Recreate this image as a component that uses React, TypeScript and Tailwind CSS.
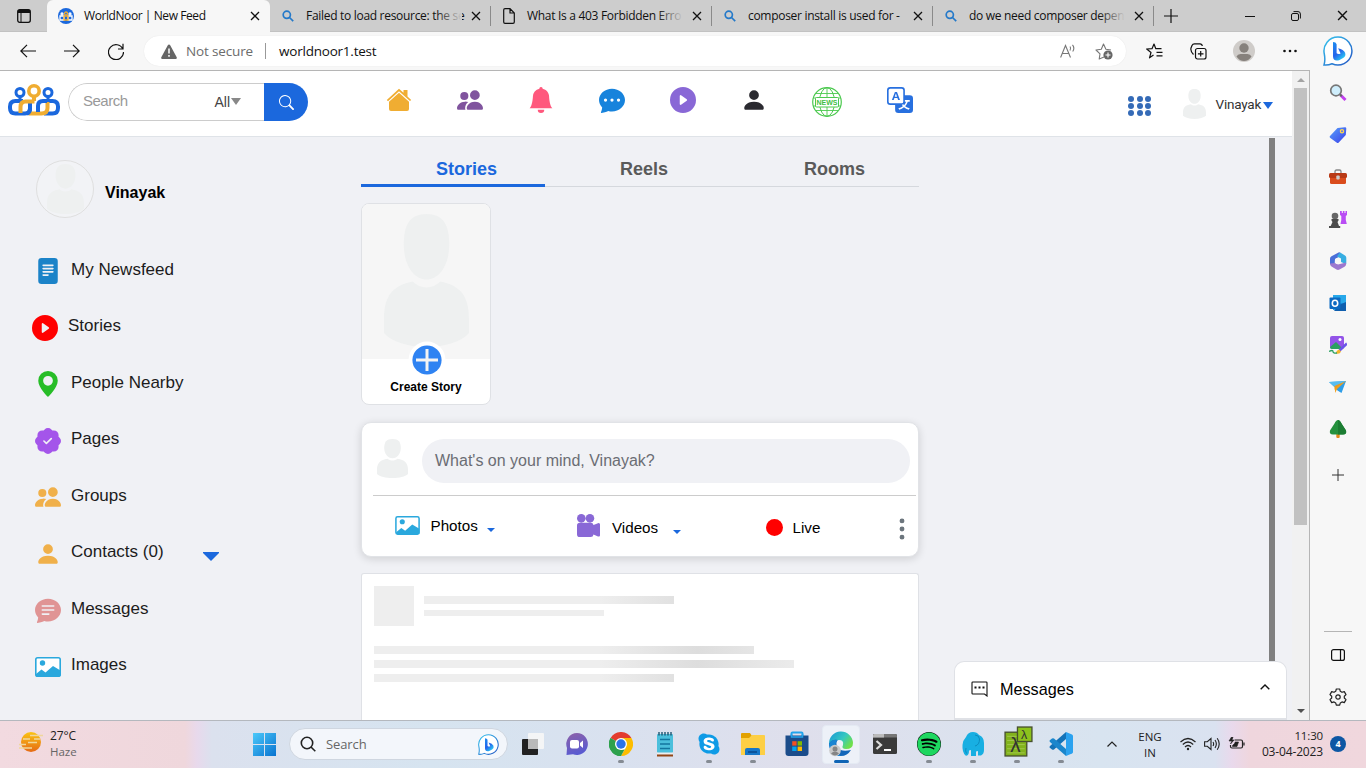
import React from "react";
import {
  BsPeopleFill, BsBellFill, BsChatDotsFill, BsPlayCircleFill, BsPersonFill, BsTranslate, BsSearch,
  BsFileTextFill, BsPatchCheckFill, BsGeoAltFill, BsCameraReelsFill, BsThreeDotsVertical,
  BsChatTextFill,
} from "react-icons/bs";
import { FaSpotify, FaSkype } from "react-icons/fa";

/* ---------- shared drawings ---------- */

function Avatar({ className }: { className: string }) {
  return (
    <svg viewBox="0 0 86 134" preserveAspectRatio="none" className={className} fill="#eef0f0">
      <path d="M43 0c17 0 23 11 23 31S56 66 43 66 20 51 20 31 26 0 43 0Z" />
      <path d="M29 68c8 8 20 8 28 0 19 4 29 13 29 38v14c-8 9-24 14-43 14S8 129 0 120v-14C0 81 10 72 29 68Z" />
    </svg>
  );
}

function Logo({ className }: { className: string }) {
  return (
    <svg viewBox="0 0 52 32" className={className} fill="none">
      <g stroke="#1b68dd" strokeWidth="3">
        <circle cx="12" cy="8.500" r="4" />
        <circle cx="40" cy="8.500" r="4" />
        <path d="M12 13v4M40 13v4" />
      </g>
      <path d="M10 17h-2.500Q2 17 2 22.500v1.500Q2 29.500 7.500 29.500H17q5 0 5-5V19" stroke="#1b68dd" strokeWidth="4" />
      <path d="M10 17h5M37 17h7.500Q50 17 50 22.500v1.500Q50 29.500 44.500 29.500H36" stroke="#1b68dd" strokeWidth="4" />
      <path d="M26 12v5M12.500 29v-6q0-5.500 5-5.500h9M39.500 18v6q0 5.500-6 5.500h-13" stroke="#f0ad32" strokeWidth="4" />
      <path d="M22 20v4.500q0 4-3 5M30 28v-6q0-5 5-5h4" stroke="#1b68dd" strokeWidth="4" />
      <circle cx="26" cy="7" r="5.200" stroke="#f0ad32" strokeWidth="3.600" />
    </svg>
  );
}

function Picture({ className }: { className: string }) {
  return (
    <svg viewBox="0 0 26 20" className={className} fill="#2aa8dd">
      <rect x=".8" y=".8" width="24.400" height="18.400" rx="1.800" fill="#fff" stroke="#2aa8dd" strokeWidth="1.600" />
      <circle cx="7.500" cy="6" r="2.700" />
      <path d="M1 17l5.500-4.500 4 3 7.500-6.500 7.500 4.500V19H1Z" />
    </svg>
  );
}

function BingBubble({ className }: { className: string }) {
  return (
    <svg viewBox="0 0 30 30" className={className}>
      <defs>
        <linearGradient id="bing-edge" x1="0" y1="0" x2="1" y2="1">
          <stop offset="0" stopColor="#35c5ee" />
          <stop offset="1" stopColor="#2455c4" />
        </linearGradient>
        <linearGradient id="bing-b" x1="0" y1="0" x2="0.6" y2="1">
          <stop offset="0" stopColor="#1c8ef0" />
          <stop offset="0.6" stopColor="#2563eb" />
          <stop offset="1" stopColor="#2bc4f3" />
        </linearGradient>
      </defs>
      <path d="M15 1a14 14 0 1 1-6 26.700Q5 29.500 1 29q1.500-5 .3-11A14 14 0 0 1 15 1Z" fill="#fff" stroke="url(#bing-edge)" strokeWidth="1.500" />
      <path d="M10 6q3 0 3.600 2.200v9q1.500 1.500 4 .3l-2.500-5.300q5.500 1.300 7 4.500 1.200 3.500-2 5.300l-4 2.200q-6 1.500-6.100-4Z" fill="url(#bing-b)" />
    </svg>
  );
}

function Cross({ className }: { className: string }) {
  return (
    <svg viewBox="0 0 10 10" className={className} stroke="currentColor" strokeWidth="1.300" fill="none">
      <path d="M1 1l8 8M9 1l-8 8" />
    </svg>
  );
}

/* ---------- browser chrome ---------- */

function Tab({ title, icon, fade }: { title: string; icon: "search" | "file"; fade: boolean }) {
  return (
    <div className="flex h-8 w-[221px] items-center pl-[12px]">
      {icon === "search" ? (
        <svg viewBox="0 0 12 12" className="mr-[12px] h-[12px] w-[12px] shrink-0" fill="none" stroke="#2479c9" strokeWidth="1.700">
          <circle cx="4.800" cy="4.800" r="3.600" />
          <path d="M7.500 7.500l3.700 3.700" />
        </svg>
      ) : (
        <svg viewBox="0 0 12 16" className="mr-[12px] h-[16px] w-[12px] shrink-0" fill="none" stroke="#111" strokeWidth="1.200">
          <path d="M.7 2Q.7.700 2 .7h5l4.300 4.300v9q0 1.300-1.300 1.300H2Q.7 15.300.7 14ZM7 .7V5h4.300" />
        </svg>
      )}
      <div className="relative w-[156px] shrink-0 whitespace-nowrap text-[12px] leading-4 tracking-[-0.3px] text-[#111]">
        {title}
        {fade && <div className="absolute inset-y-0 right-0 w-[26px] bg-gradient-to-r from-transparent to-[#cdcdcd]" />}
      </div>
      <Cross className="ml-[9px] h-[10px] w-[10px] shrink-0 text-[#111]" />
      <div className="ml-auto h-5 w-px bg-[#8a8a8a]" />
    </div>
  );
}

function TabStrip() {
  return (
    <div className="flex h-8 shrink-0 items-center border-b border-[#c2c2c2] bg-[#cdcdcd]">
      <div className="flex w-[47px] justify-center">
        <svg viewBox="0 0 14 14" className="h-[14px] w-[14px]" fill="none" stroke="#111">
          <rect x=".7" y=".7" width="12.600" height="12.600" rx="2" strokeWidth="1.300" />
          <path d="M1 2.500h12" strokeWidth="3" />
          <path d="M4 3v10" />
        </svg>
      </div>
      <div className="flex h-8 w-[223px] items-center rounded-t-[6px] bg-[#f7f7f7] pl-[11px]">
        <div className="mr-[10px] flex h-4 w-4 items-center justify-center rounded-full bg-[#1b68dd]">
          <svg viewBox="0 0 14 10" className="h-[10px] w-[14px]" fill="none" strokeWidth="1.300">
            <path d="M1 5h4v4H1ZM9 5h4v4H9Z" stroke="#fff" />
            <path d="M5 5h4v4H5Z" stroke="#f0ad32" />
            <circle cx="7" cy="2.500" r="1.500" stroke="#f0ad32" />
            <circle cx="3" cy="3" r="1" stroke="#fff" />
            <circle cx="11" cy="3" r="1" stroke="#fff" />
          </svg>
        </div>
        <div className="w-[166px] whitespace-nowrap text-[12px] leading-4 tracking-[-0.42px] text-[#111]">WorldNoor | New Feed</div>
        <Cross className="h-[10px] w-[10px] text-[#111]" />
      </div>
      <Tab title="Failed to load resource: the se" icon="search" fade />
      <Tab title="What Is a 403 Forbidden Erro" icon="file" fade />
      <Tab title="composer install is used for -" icon="search" fade={false} />
      <Tab title="do we need composer depen" icon="search" fade />
      <svg viewBox="0 0 14 14" className="ml-[10px] h-[14px] w-[14px]" stroke="#111" strokeWidth="1.200"><path d="M7 0v14M0 7h14" /></svg>
      <div className="ml-auto flex items-center gap-[36px] pr-[18px]">
        <svg viewBox="0 0 10 10" className="h-[10px] w-[10px]" stroke="#111"><path d="M0 5.500h10" /></svg>
        <svg viewBox="0 0 10 10" className="h-[10px] w-[10px]" fill="none" stroke="#111">
          <rect x=".5" y="2.500" width="7" height="7" rx="1.500" />
          <path d="M2.500.6H7Q9.400.600 9.400 3v4.500" />
        </svg>
        <Cross className="h-[11px] w-[11px] text-[#111]" />
      </div>
    </div>
  );
}

function Toolbar() {
  return (
    <div className="flex h-[38px] shrink-0 items-center bg-[#f7f7f7]">
      <svg viewBox="0 0 16 14" className="ml-[20px] h-[14px] w-[16px]" fill="none" stroke="#111" strokeWidth="1.200"><path d="M16 7H1M7 .8L.8 7 7 13.200" /></svg>
      <svg viewBox="0 0 16 14" className="ml-[28px] h-[14px] w-[16px]" fill="none" stroke="#111" strokeWidth="1.200"><path d="M0 7h15M9 .8L15.200 7 9 13.200" /></svg>
      <svg viewBox="0 0 16 17" className="ml-[28px] h-[17px] w-[16px]" fill="none" stroke="#111" strokeWidth="1.200"><path d="M14.800 6A7.500 7.500 0 1 0 15.500 9M15 .8V6H10" /></svg>
      <div className="ml-[20px] flex h-[30px] w-[982px] items-center rounded-full bg-white pl-[17px] shadow-[0_0_1px_#ddd]">
        <svg viewBox="0 0 16 15" className="h-[15px] w-[16px]">
          <path d="M8 .5q.8 0 1.200.800l6.500 12q.5 1.500-1 1.700H1.300Q-.2 14.800.3 13.300l6.500-12Q7.200.500 8 .5Z" fill="#666" />
          <path d="M8 4.500v5M8 11v1.700" stroke="#fff" strokeWidth="1.500" />
        </svg>
        <div className="ml-[9px] w-[79px] whitespace-nowrap text-[13.500px] leading-5 tracking-[-0.15px] text-[#6c6c6c]">Not secure</div>
        <div className="h-[16px] w-px bg-[#999]" />
        <div className="ml-[13px] w-[781px] text-[13.500px] leading-5 tracking-[-0.22px] text-[#111]">worldnoor1.test</div>
        <svg viewBox="0 0 16 14" className="h-[14px] w-[16px]" fill="none" stroke="#777" strokeWidth="1.100">
          <path d="M.6 13.500L5.500 1.500l5 12M2.300 9.500h6.500M10 2.500q1.300 1.500 0 4M12.500.800q2.600 3.200.2 6.700" />
        </svg>
        <svg viewBox="0 0 18 18" className="ml-[19px] h-[18px] w-[18px]" fill="none">
          <path d="M9 15l-4.800 2 .8-5.200L1 8l5.300-.8L8.500 2l2.400 5.200L16 8" stroke="#777" strokeWidth="1.100" strokeLinejoin="round" />
          <circle cx="13" cy="13" r="4.600" fill="#666" />
          <path d="M13 10.500v5M10.500 13h5" stroke="#fff" strokeWidth="1.100" />
        </svg>
      </div>
      <svg viewBox="0 0 17 16" className="ml-[20px] h-[16px] w-[17px]" fill="none" stroke="#111" strokeWidth="1.200" strokeLinejoin="round">
        <path d="M7.500 12L3.500 14.800 5 9.500.7 6 6 5.700 8 1l1.800 4.700h5.700M10.500 9.300h6M10.500 12.800h6" />
      </svg>
      <svg viewBox="0 0 17 17" className="ml-[27px] h-[17px] w-[17px]" fill="none" stroke="#111" strokeWidth="1.200">
        <rect x="5.500" y="5.500" width="10.500" height="10.500" rx="2" />
        <path d="M10.700 8v5.600M7.900 10.800h5.600M3.500 11.500Q.2 8 1 5L2 2.500Q2.700 1 4.500.900L10 .800q2 0 2.300 2.200" />
      </svg>
      <svg viewBox="0 0 22 22" className="ml-[26px] h-[22px] w-[22px]">
        <circle cx="11" cy="11" r="11" fill="#cfccc9" />
        <circle cx="11" cy="8" r="4.700" fill="#86817c" />
        <path d="M3.500 16.500q1-2.500 4-2.500h7q3 0 4 2.500Q15.500 21 11 21t-7.500-4.500Z" fill="#86817c" />
      </svg>
      <svg viewBox="0 0 14 4" className="ml-[28px] h-[4px] w-[14px]" fill="#111"><circle cx="1.500" cy="2" r="1.300" /><circle cx="7" cy="2" r="1.300" /><circle cx="12.500" cy="2" r="1.300" /></svg>
      <BingBubble className="ml-[26px] h-[30px] w-[30px]" />
    </div>
  );
}

/* ---------- site ---------- */

function NewsGlobe() {
  return (
    <svg viewBox="0 0 30 30" className="ml-[45px] h-[30px] w-[30px]" fill="none" stroke="#4cc94f">
      <circle cx="15" cy="15" r="14.300" strokeWidth="1.200" />
      <ellipse cx="15" cy="15" rx="7.500" ry="14.300" />
      <path d="M15 1v28M3.500 6.500h23M3.500 23.500h23M1 11h28M1 19h28" strokeWidth=".9" />
      <rect x="3.500" y="10.500" width="23" height="9.500" rx="1" fill="#fff" />
      <text x="15" y="17.800" textAnchor="middle" fontFamily="Liberation Sans, sans-serif" fontWeight="bold" fontSize="7" fill="#3fbf42" stroke="none">NEWS</text>
    </svg>
  );
}

function SiteHeader() {
  return (
    <header className="flex h-[66px] shrink-0 items-start border-b border-[#dfe3e8] bg-white pl-[8px]">
      <Logo className="mt-[13px] h-[32px] w-[52px]" />
      <div className="ml-[8px] mt-[12px] flex h-[38px] w-[240px] overflow-hidden rounded-full">
        <div className="flex w-[196px] items-center rounded-l-full border border-r-0 border-[#ccc] pl-[14px] text-[14px]">
          <div className="mt-[-2px] w-[131.500px] text-[15px] tracking-[-0.5px] text-[#999]">Search</div>
          <div className="text-[14px] text-[#444]">All</div>
          <svg viewBox="0 0 10 7" className="ml-[1px] mt-[-2px] h-[7px] w-[10px]" fill="#888"><path d="M0 0h10L5 7Z" /></svg>
        </div>
        <div className="flex w-[44px] items-center justify-center bg-[#1b68dd] text-white"><BsSearch size={15} /></div>
      </div>
      <nav className="ml-[78px] mt-[16px] flex items-start">
        <svg viewBox="0 0 26 26" className="h-[26px] w-[26px]" fill="#f0ad32">
          <path d="M.8 13L13 1.800l4.500 4V3h4v6.500l3.700 3.400-1.200 1.200L13 4.200 2 14.200Z" />
          <path d="M13 5.700l10 9V22q0 2-2 2H5q-2 0-2-2v-7.300Z" />
        </svg>
        <BsPeopleFill size={26} className="ml-[45px] text-[#80549e]" />
        <BsBellFill size={26} className="ml-[45px] text-[#ff587d]" />
        <BsChatDotsFill size={26} className="ml-[45px] text-[#1783dc]" />
        <BsPlayCircleFill size={26} className="ml-[45px] text-[#8968d6]" />
        <BsPersonFill size={26} className="ml-[45px] text-[#2b2a30]" />
        <NewsGlobe />
        <BsTranslate size={26} className="ml-[45px] text-[#2870df]" />
      </nav>
      <div className="ml-[215px] mt-[25px] grid grid-cols-3 gap-x-[2.500px] gap-y-[1.200px]">
        {[0, 1, 2, 3, 4, 5, 6, 7, 8].map((n) => <div key={n} className="h-[6px] w-[6px] rounded-full bg-[#356bb7]" />)}
      </div>
      <Avatar className="ml-[32px] mt-[18px] h-[30px] w-[23px]" />
      <div className="ml-[9.500px] mt-[23px] w-[47.500px] whitespace-nowrap font-[Roboto,sans-serif] text-[13.500px] leading-5 tracking-[-0.2px] text-[#333]">Vinayak</div>
      <svg viewBox="0 0 10 7" className="mt-[31px] h-[7px] w-[10px]" fill="#1b68dd"><path d="M0 0h10L5 7Z" /></svg>
    </header>
  );
}

function MenuRow({ icon, label, wide }: { icon: React.ReactNode; label: string; wide?: boolean }) {
  return (
    <div className={wide ? "flex h-[56.500px] items-center pl-[32px]" : "flex h-[56.500px] items-center pl-[35px]"}>
      <div className="mr-[10px] mt-[3px]">{icon}</div>
      <div className="whitespace-nowrap text-[17px] text-[#1c1c1c]">{label}</div>
    </div>
  );
}

function LeftMenu() {
  return (
    <aside className="w-[361px] shrink-0">
      <div className="flex h-[104.400px] items-start pl-[36px] pt-[23px]">
        <div className="flex h-[58px] w-[58px] justify-center overflow-hidden rounded-full border border-[#dfdfdf] bg-[#f2f3f6]">
          <Avatar className="mt-[3px] h-[50px] w-[37px]" />
        </div>
        <div className="ml-[11px] mt-[21px] text-[16px] font-bold text-black">Vinayak</div>
      </div>
      <MenuRow label="My Newsfeed" icon={<BsFileTextFill size={26} className="text-[#1b83c8]" />} />
      <MenuRow label="Stories" wide icon={<BsPlayCircleFill size={26} className="text-[#ff0000]" />} />
      <MenuRow label="People Nearby" icon={<BsGeoAltFill size={26} className="text-[#27bd27]" />} />
      <MenuRow label="Pages" icon={<BsPatchCheckFill size={26} className="text-[#a455ea]" />} />
      <MenuRow label="Groups" icon={<BsPeopleFill size={26} className="text-[#f0b04a]" />} />
      <div className="flex">
        <MenuRow label="Contacts (0)" icon={<BsPersonFill size={26} className="text-[#f0b04a]" />} />
        <svg viewBox="0 0 16 9" className="ml-[39px] mt-[28px] h-[9px] w-[16px]" fill="#1b68dd"><path d="M0 0h16v1L8 9 0 1Z" /></svg>
      </div>
      <MenuRow label="Messages" icon={<BsChatTextFill size={26} className="text-[#e09494]" />} />
      <MenuRow label="Images" icon={<Picture className="h-[20px] w-[26px]" />} />
    </aside>
  );
}

function Feed() {
  return (
    <main className="flex h-[583px] w-[558px] shrink-0 flex-col overflow-visible">
      <div className="mt-[14px] flex h-[36px] text-[18px] font-bold text-[#5a5a5a]">
        <div className="w-[184px] border-b-[3px] border-[#1b68dd] pl-[75px] pt-[5px] text-[#1b68dd]">Stories</div>
        <div className="w-[184px] border-b border-[#d5d8dd] pl-[75px] pt-[5px]">Reels</div>
        <div className="w-[190px] border-b border-[#d5d8dd] pl-[75px] pt-[5px]">Rooms</div>
      </div>
      <div className="mt-[16px] flex h-[202px] w-[130px] shrink-0 flex-col items-center overflow-hidden rounded-[8px] border border-[#dfe1e5] bg-white">
        <div className="flex h-[155px] w-full shrink-0 justify-center bg-[#f6f6f6]">
          <Avatar className="ml-[1px] mt-[10px] h-[133px] w-[85px]" />
        </div>
        <svg viewBox="0 0 38 38" className="-mt-[18.500px] ml-[1px] h-[38px] w-[38px] shrink-0">
          <circle cx="19" cy="19" r="18.500" fill="#fff" />
          <circle cx="19" cy="19" r="14.600" fill="#2f83f2" />
          <path d="M19 8v22M8 19h22" stroke="#f3f3f3" strokeWidth="3" />
        </svg>
        <div className="-mt-[1px] text-[12px] font-bold leading-[18px] text-black">Create Story</div>
      </div>
      <section className="mt-[17px] h-[135px] w-[558px] shrink-0 rounded-[10px] border border-[#e1e3e7] bg-white shadow-[0_2px_8px_rgba(0,0,0,0.14)]">
        <div className="flex pt-[16px]">
          <Avatar className="ml-[15px] h-[39px] w-[31px]" />
          <div className="ml-[14px] h-[44px] w-[488px] rounded-full bg-[#f0f1f5] pl-[13px] pt-[10px] text-[16px] leading-6 text-[#6b6d74]">What's on your mind, Vinayak?</div>
        </div>
        <div className="ml-[11px] mt-[12px] h-px w-[543px] bg-[#ccc]" />
        <div className="flex items-start text-[15.200px] leading-5 text-black">
          <Picture className="ml-[33px] mt-[20px] h-[19px] w-[25px]" />
          <div className="ml-[10.500px] mt-[20px] w-[56.500px]">Photos</div>
          <svg viewBox="0 0 8 4" className="mt-[32px] h-[4px] w-[8px]" fill="#1b68dd"><path d="M0 0h8L4 4Z" /></svg>
          <BsCameraReelsFill size={23} className="ml-[82px] mt-[18px] text-[#8968d6]" />
          <div className="ml-[12px] mt-[22px] w-[61px]">Videos</div>
          <svg viewBox="0 0 8 4" className="mt-[34px] h-[4px] w-[8px]" fill="#1b68dd"><path d="M0 0h8L4 4Z" /></svg>
          <div className="ml-[85px] mt-[22.500px] h-[17px] w-[17px] rounded-full bg-[#ff0000]" />
          <div className="ml-[9.500px] mt-[22px] w-[96.500px]">Live</div>
          <BsThreeDotsVertical size={26} className="mt-[20px] text-[#6c757d]" />
        </div>
      </section>
      <section className="mt-[16px] h-[147px] shrink-0 rounded-t-[3px] border border-b-0 border-[#dfe1e6] bg-white px-[12px] pt-[12px]">
        <div className="flex">
          <div className="h-10 w-10 bg-[#eee]" />
          <div className="ml-[10px] pt-[10px]">
            <div className="h-[8px] w-[250px] bg-[linear-gradient(90deg,#eee_176px,#ddd_273px)]" />
            <div className="mt-[6px] h-[6px] w-[180px] bg-[#eee]" />
          </div>
        </div>
        <div className="mt-[20px] h-[8px] w-[380px] bg-[linear-gradient(90deg,#eee_226px,#ddd_323px,#eee_440px)]" />
        <div className="mt-[6px] h-[8px] w-[420px] bg-[linear-gradient(90deg,#eee_226px,#ddd_323px,#eee_440px)]" />
        <div className="mt-[6px] h-[8px] w-[300px] bg-[linear-gradient(90deg,#eee_226px,#ddd_323px)]" />
      </section>
    </main>
  );
}

function SitePage() {
  return (
    <div className="relative flex h-[649px] w-[1292px] shrink-0 flex-col overflow-hidden bg-[#f0f1f5] font-['Liberation_Sans',Arial,sans-serif]">
      <SiteHeader />
      <div className="flex h-[583px]">
        <LeftMenu />
        <Feed />
        <div className="ml-[350px] mt-px w-[6px] bg-[#808080]" />
      </div>
      <div className="absolute bottom-0 left-[954px] flex h-[59px] w-[333px] items-center rounded-t-[10px] border border-b-2 border-[#dfe1e6] bg-white pl-[16px] pr-[16px]">
        <svg viewBox="0 0 17 16" className="mt-[-2px] h-[16px] w-[17px]" fill="none" stroke="#111" strokeWidth="1.100">
          <path d="M1.800 1h13.400q.8 0 .8.800V15l-2.500-2H1.800Q1 13 1 12.200V1.800Q1 1 1.800 1Z" />
          <path d="M3.500 6.500h2M7.500 6.500h2M11.500 6.500h2" strokeWidth="2" />
        </svg>
        <div className="-mt-[2px] ml-[12px] text-[16.200px] text-black">Messages</div>
        <svg viewBox="0 0 10 6" className="ml-auto mt-[-6px] h-[6px] w-[10px]" fill="none" stroke="#111" strokeWidth="1.400"><path d="M.7 5.300L5 1l4.300 4.300" /></svg>
      </div>
    </div>
  );
}

function Scrollbar() {
  return (
    <div className="flex h-[649px] w-[17px] shrink-0 flex-col items-center bg-[#f1f1f1]">
      <svg viewBox="0 0 8 4" className="mt-[7px] h-[4px] w-[8px]" fill="#a3a3a3"><path d="M0 4h8L4 0Z" /></svg>
      <div className="mt-[6px] h-[437px] w-[13px] bg-[#c1c1c1]" />
      <svg viewBox="0 0 8 4" className="mb-[7px] mt-auto h-[4px] w-[8px]" fill="#505050"><path d="M0 0h8L4 4Z" /></svg>
    </div>
  );
}

/* ---------- Edge side rail ---------- */

const railIcons: React.ReactNode[] = [
  <g>
    <path d="M11.500 11L16.500 16" stroke="#c23ff0" strokeWidth="3" />
    <path d="M10.500 10l2.300 2.300" stroke="#666" strokeWidth="2" />
    <circle cx="7" cy="6.500" r="5.300" fill="#cfeefc" stroke="#777" strokeWidth="1.700" />
  </g>,
  <g>
    <path d="M1 10l7.500-8L16 1.200q1.300 0 1.300 1.300l-.5 6.500-7.300 7.700q-.8.800-1.600 0l-6.900-5q-.8-.8 0-1.700Z" fill="url(#rail-blue)" />
    <circle cx="13" cy="5.200" r="1.600" fill="#5b6bf0" stroke="#ffd84a" strokeWidth="1.300" />
  </g>,
  <g>
    <path d="M6 5V3.500Q6 2 7.500 2h3Q12 2 12 3.500V5" fill="none" stroke="#888" strokeWidth="1.300" />
    <rect x="1" y="7" width="16" height="9" rx="1.500" fill="#da4c1c" />
    <rect x="0" y="5" width="18" height="5" rx="1.500" fill="#b93a16" />
    <rect x="7.300" y="7.500" width="3.400" height="4" rx="1" fill="#ccc" />
  </g>,
  <g>
    <path d="M11 1h1.800v2h1V1h1.700v2h1V1H18v4l-1.200 1v4l1 4H11.500l.8-4V6L11 5Z" fill="#b94df4" />
    <circle cx="6" cy="6" r="3.300" fill="#666" />
    <path d="M2.500 9h7v1.500L8.500 12l1.500 4h1.200v2H0v-2h1.700L3.500 12l-1-1.500Z" fill="#4b4b4b" />
  </g>,
  <g>
    <path d="M9.500.5L2.500 4.300Q1 5 1 6.800V12l4.500 2.500L6 7l6-3.300V1Q10.500 0 9.500.500Z" fill="#4a6fd8" />
    <path d="M12 1l4 2.500q1.300.700 1.300 2.300v6.500L12 10V6.500L8 4.500 10.500 1Z" fill="#37aee2" />
    <path d="M1 11.500L6 11l3 1.500 8-2v2q0 1.500-1.500 2.300l-5 2.800q-1.500.7-3 0l-5-3Q1 13.500 1 11.500Z" fill="#9c78cf" />
    <circle cx="9" cy="9" r="3.100" fill="#f7f7f7" />
  </g>,
  <g>
    <rect x="4" y="1" width="13" height="15" fill="#28a8ea" />
    <path d="M4 9l13 7V9Z" fill="#1490df" />
    <path d="M10 11l7-3v9H5Z" fill="#0f5fae" />
    <rect x="0.500" y="3.500" width="11" height="11.500" rx="1" fill="#0c6ac2" />
    <ellipse cx="6" cy="9.200" rx="2.700" ry="3" fill="none" stroke="#fff" strokeWidth="1.600" />
  </g>,
  <g>
    <rect x="1" y="0" width="14" height="13" rx="2" fill="#9354e8" />
    <path d="M1 11l6-5 6 6-1 1H3q-2 0-2-2Z" fill="#2aa05f" />
    <circle cx="11" cy="3.500" r="1.500" fill="#fff" />
    <path d="M18 7.500l-7.500 7" stroke="#6a55e8" strokeWidth="2.600" />
    <path d="M7 17.500q0-3 3-4l2 2q-1 3-5 2Z" fill="#f4b52a" />
    <path d="M0 15.500q4-2 4 0t4 1.500" fill="none" stroke="#2aa05f" strokeWidth="1.300" />
  </g>,
  <g>
    <path d="M0 4l17-1-4.500 12-4-2.500L5.500 9Z" fill="#2f9ee8" />
    <path d="M17 3L6 9v6l2.500-4.500Z" fill="#f2a11f" />
    <path d="M0 4l17-1L5.500 9Z" fill="#58bdf0" />
    <path d="M17 3L5.500 8v4l2-3Z" fill="#ec9a1c" />
  </g>,
  <g>
    <rect x="7.300" y="13" width="3.400" height="5" rx="1" fill="#e28a1b" />
    <path d="M9 0q2 0 3.500 3.500L17 10.500q1 4-3 4H4q-4 0-3-4L5.500 3.500Q7 0 9 0Z" fill="#25913e" />
    <path d="M9 0q2 0 3.500 3.500L17 10.500q1 4-3 4H9Z" fill="#1c7d33" />
  </g>,
];

function SideRail() {
  return (
    <div className="flex h-[650px] w-[57px] shrink-0 flex-col items-center border-l border-[#b5b5b5] bg-[#f7f7f7] pt-[14px]">
      <svg className="h-0 w-0">
        <linearGradient id="rail-blue" x1="0" y1="0" x2="1" y2="1"><stop offset="0" stopColor="#58a2fb" /><stop offset="1" stopColor="#3b3fe8" /></linearGradient>
      </svg>
      <div className="flex flex-col gap-[24px]">
        {railIcons.map((icon, i) => <svg key={i} viewBox="0 0 18 18" className="h-[18px] w-[18px]">{icon}</svg>)}
      </div>
      <svg viewBox="0 0 12 12" className="mt-[31px] h-[12px] w-[12px]" stroke="#333"><path d="M6 0v12M0 6h12" /></svg>
      <div className="mt-auto h-px w-[28px] bg-[#b5b5b5]" />
      <svg viewBox="0 0 14 12" className="mt-[17px] h-[12px] w-[14px]" fill="none" stroke="#111" strokeWidth="1.200"><rect x=".6" y=".6" width="12.800" height="10.800" rx="2" /><path d="M9.500 0v12" /></svg>
      <svg viewBox="0 0 18 18" className="mb-[14px] mt-[27px] h-[18px] w-[18px]" fill="none" stroke="#222" strokeWidth="1.200" strokeLinejoin="round">
        <path d="M7.300 1h3.400l.6 2.300 1.700 1 2.300-.7 1.700 3-1.700 1.600v1.800l1.700 1.600-1.700 3-2.300-.7-1.700 1-.6 2.300H7.300l-.6-2.300-1.700-1-2.300.7-1.700-3L2.700 10V8.200L1 6.600l1.700-3 2.300.7 1.700-1Z" />
        <circle cx="9" cy="9" r="2.200" />
      </svg>
    </div>
  );
}

/* ---------- taskbar ---------- */

function Slot({ children, running, active }: { children: React.ReactNode; running?: boolean; active?: boolean }) {
  return (
    <div className={active ? "mx-[3px] mt-[4px] flex h-[39px] w-[38px] flex-col items-center rounded-[4px] border border-[#e4eaf3] bg-[#edf1f8]" : "mt-[4px] flex h-[39px] w-[44px] flex-col items-center"}>
      <div className={active ? "mt-[5px] flex h-[26px] items-center" : "mt-[6px] flex h-[26px] items-center"}>{children}</div>
      {running && <div className="mt-[3px] h-[3px] w-[6px] rounded-full bg-[#858b93]" />}
      {active && <div className="mt-[3px] h-[3px] w-[15px] rounded-full bg-[#0f64b5]" />}
    </div>
  );
}

function TaskIcons() {
  return (
    <div className="ml-[3px] flex items-start">
      <Slot><svg viewBox="0 0 24 24" className="h-[24px] w-[24px]"><rect x="1" y="7" width="16" height="16" rx="1" fill="#222" /><rect x="7" y="1" width="16" height="16" rx="1" fill="#f4f5f6" /><rect x="7" y="7" width="10" height="10" fill="#b9b9b9" /></svg></Slot>
      <Slot><svg viewBox="0 0 24 24" className="h-[24px] w-[24px]"><defs><linearGradient id="chat" x1="0" y1="0" x2=".3" y2="1"><stop offset="0" stopColor="#8e62a8" /><stop offset="1" stopColor="#5a5bd0" /></linearGradient></defs><path d="M12 1a11 11 0 1 1-4 21.300L1.500 23 2 16A11 11 0 0 1 12 1Z" fill="url(#chat)" /><rect x="5" y="8" width="9" height="8.500" rx="2" fill="#fff" /><path d="M15 11l3-2.500v7.500L15 13.500Z" fill="#fff" /></svg></Slot>
      <Slot running><svg viewBox="0 0 24 24" className="h-[24px] w-[24px]">
        <path d="M12 12L1.600 6a12 12 0 0 1 20.800 0Z" fill="#e33b2e" /><path d="M12 12v12A12 12 0 0 1 1.600 6Z" fill="#2da14d" /><path d="M12 6h10.400A12 12 0 0 1 12 24l5.200-9Z" fill="#fdbd00" /><path d="M1.600 6l5.200 9L12 18l3.500-.5L12 24A12 12 0 0 1 1.600 6Z" fill="#2da14d" />
        <circle cx="12" cy="12" r="6" fill="#fff" /><circle cx="12" cy="12" r="4.700" fill="#2c73e8" /></svg></Slot>
      <Slot><svg viewBox="0 0 18 25" className="h-[25px] w-[18px]"><rect x="1" y="2" width="16" height="19" rx="1" fill="#4bbfdc" /><path d="M3 0v3.500M6 0v3.500M9 0v3.500M12 0v3.500M15 0v3.500" stroke="#1d5470" strokeWidth="1.400" /><path d="M4 7.500h10M4 12h10M4 16.500h10" stroke="#13769e" strokeWidth="1.600" /><rect x="1" y="20.500" width="16" height="2" fill="#eee" /><rect x="1" y="22.500" width="16" height="2" fill="#934615" /></svg></Slot>
      <Slot running><div className="h-[24px] w-[24px] rounded-full bg-[radial-gradient(circle,#fff_55%,transparent_56%)]"><FaSkype size={24} className="text-[#0f9be6]" /></div></Slot>
      <Slot running><svg viewBox="0 0 24 24" className="h-[24px] w-[24px]"><path d="M0 2q0-1 1-1h8l2 3h13v9H0Z" fill="#e2a100" /><path d="M0 6h8l3-3h12q1 0 1 1v19H0Z" fill="#fdcf45" /><path d="M4 23v-5q0-2 2-2h11q2 0 2 2v5Z" fill="#1676c8" /><rect x="7" y="19" width="9" height="2" fill="#0b539b" /></svg></Slot>
      <Slot><svg viewBox="0 0 24 26" className="h-[26px] w-[24px]"><path d="M6.500 6V2.500q0-1 1-1h9q1 0 1 1V6" fill="none" stroke="#20a4ec" strokeWidth="2" /><path d="M0.500 4.500h23v17.500q0 3-3 3h-17q-3 0-3-3Z" fill="#1b4c8a" /><path d="M6.500 3v3h11V3" fill="none" stroke="#20a4ec" strokeWidth="1.500" /><path d="M7.200 10.200h4.400v4.400H7.200Z" fill="#f25022" /><path d="M12.600 10.200h4.400v4.400h-4.400Z" fill="#7fba00" /><path d="M7.200 15.600h4.400v4.400H7.200Z" fill="#00a4ef" /><path d="M12.600 15.600h4.400v4.400h-4.400Z" fill="#ffb900" /></svg></Slot>
      <Slot active><svg viewBox="0 0 26 26" className="h-[26px] w-[26px]"><defs><linearGradient id="edge-top" x1="0" y1="0" x2="1" y2=".6"><stop offset="0" stopColor="#1796d8" /><stop offset=".6" stopColor="#35c8c0" /><stop offset="1" stopColor="#6fe04a" /></linearGradient></defs>
        <path d="M1 13A12 12 0 0 1 25 12q0 6-7 6-5 0-3-4 1-5-4-5Q5 9 1 15Z" fill="url(#edge-top)" /><path d="M1 13q3-5 8.500-4Q7 13 10 17t13 2q-4 6.500-11 6Q2 24 1 13Z" fill="#1366b9" /><path d="M9.500 9Q6 13 8 19t7 6Q2 26 1 13q3-5 8.500-4Z" fill="#1a85d2" /><circle cx="7" cy="19.500" r="5.800" fill="#c9c9c9" /><circle cx="7" cy="18" r="2.500" fill="#858585" /><path d="M3 22.500q4-4 8 0-4 4-8 0Z" fill="#858585" /></svg></Slot>
      <Slot><svg viewBox="0 0 24 22" className="h-[22px] w-[24px]"><rect y="1" width="24" height="20" rx="1.500" fill="#3a3a3a" /><path d="M0 4.500V2.500Q0 1 1.500 1h21Q24 1 24 2.500v2Z" fill="#777" /><path d="M0 4.500V2.500Q0 1 1.500 1H11v3.500Z" fill="#bbb" /><path d="M3.500 8l4.500 4-4.500 4" fill="none" stroke="#ddd" strokeWidth="2.200" /><path d="M11 17h7" stroke="#fff" strokeWidth="2" /></svg></Slot>
      <Slot running><div className="rounded-full bg-black"><FaSpotify size={24} className="text-[#1ed760]" /></div></Slot>
      <Slot running><svg viewBox="0 0 24 26" className="h-[26px] w-[24px]"><path d="M5 6Q7 1 12 1q4 0 6 3 5 2 5 8v7q0 4-3 5.500h-3V20l-2 .5V25h-5v-6l-2 .5q0 6-3.500 5Q1 21 1.500 14 2 9 5 6Z" fill="#18afe2" /><path d="M14 4q4 0 4.500 4 0 6-4.500 7M5 17q-1 3 .5 5.500" fill="none" stroke="#0a83b5" strokeWidth=".8" /></svg></Slot>
      <Slot running><svg viewBox="0 0 28 30" className="-mt-[5px] ml-[2px] h-[31px] w-[29px]" fontFamily="Liberation Sans, sans-serif"><rect x="1" y="6" width="21" height="23" fill="#82b31c" stroke="#48512f" strokeWidth="1.300" /><path d="M3 10h17M3 14h17M3 18h17M3 22h17M3 26h17" stroke="#a8cb56" strokeWidth=".8" /><text x="6" y="25.500" fontSize="20" fill="#333">λ</text><rect x="13" y="1" width="14" height="14" fill="#8cc21c" stroke="#48512f" strokeWidth="1.300" /><text x="16.500" y="12.500" fontSize="12" fill="#333">λ</text></svg></Slot>
      <Slot running><svg viewBox="0 0 24 24" className="h-[24px] w-[24px]"><path d="M17 0v7L5 17.500q-1 .7-2 0L.8 15.700Q0 15 1 14Z" fill="#1473b8" /><path d="M17 24v-7L5 6.500q-1-.7-2 0L.8 8.300Q0 9 1 10Z" fill="#1a86cc" /><path d="M17 0l6 2.600q1 .5 1 1.500v15.800q0 1-1 1.500L17 24Z" fill="#2ba2ef" /></svg></Slot>
    </div>
  );
}

function Taskbar() {
  return (
    <footer className="flex h-[48px] shrink-0 items-start border-t border-[#b4b8be] bg-[linear-gradient(90deg,#f2dae0_0px,#efd7dc_185px,#e8d9ec_197px,#dbe1ee_212px,#d6e4f0_430px,#d9e1ef_620px,#dfdfec_800px,#d8e4f0_1100px,#dae2f0_1215px,#e9d9ec_1232px,#efd6dd_1250px,#f0d7dd_1366px)] text-[#222]">
      <svg viewBox="0 0 24 22" className="ml-[19px] mt-[10px] h-[22px] w-[24px]">
        <defs><linearGradient id="haze" x1="0" y1="0" x2="0" y2="1"><stop offset="0" stopColor="#fbc413" /><stop offset="1" stopColor="#e56a16" /></linearGradient></defs>
        <circle cx="12" cy="11" r="10" fill="url(#haze)" />
        <path d="M11 4.500h13M4 8h7M9 11.500h9M0 13.500h7M0 17h13M15 8h6" stroke="#f0d79b" strokeWidth="1.300" />
      </svg>
      <div className="ml-[7px] mt-[7px] w-[202px] text-[12px] leading-4 tracking-[-0.1px]"><div>27°C</div><div className="text-[11.500px] tracking-[0px] text-[#666]">Haze</div></div>
      <svg viewBox="0 0 23 23" className="ml-[1px] mt-[12px] h-[23px] w-[23px]"><defs><linearGradient id="win" x1="0" y1="0" x2="1" y2="1"><stop offset="0" stopColor="#4cc9fa" /><stop offset="1" stopColor="#0873d0" /></linearGradient></defs><path d="M0 0h11v11H0ZM12 0h11v11H12ZM0 12h11v11H0ZM12 12h11v11H12Z" fill="url(#win)" /></svg>
      <div className="ml-[13px] mt-[7px] flex h-[32px] w-[219px] items-center rounded-full border border-[#cfd6e0] bg-[#f3f6fb] pl-[10px]">
        <svg viewBox="0 0 16 16" className="h-[16px] w-[16px]" fill="none" stroke="#222" strokeWidth="1.600"><circle cx="7" cy="7" r="5.700" /><path d="M11 11l4.300 4.300" /></svg>
        <div className="ml-[10px] w-[152px] text-[13px] leading-5 tracking-[-0.1px] text-[#666]">Search</div>
        <BingBubble className="h-[21px] w-[21px]" />
      </div>
      <TaskIcons />
      <svg viewBox="0 0 10 6" className="ml-[24px] mt-[20px] h-[6px] w-[10px]" fill="none" stroke="#222" strokeWidth="1.200"><path d="M.5 5.500L5 1l4.500 4.500" /></svg>
      <div className="ml-[17px] mt-[8px] w-[32px] text-center text-[11.500px] leading-4"><div>ENG</div><div>IN</div></div>
      <svg viewBox="0 0 16 14" className="ml-[14px] mt-[16px] h-[14px] w-[16px]" fill="none" stroke="#222" strokeWidth="1.200"><path d="M.5 5Q8-2 15.500 5M2.800 7.500q5.200-5 10.400 0M5 10q3-3 6 0" /><circle cx="8" cy="12" r="1.200" fill="#222" stroke="none" /></svg>
      <svg viewBox="0 0 16 14" className="ml-[8px] mt-[16px] h-[14px] w-[16px]" fill="none" stroke="#222" strokeWidth="1.100"><path d="M.6 4.700h2.700L7 1.500v11L3.300 9.300H.6ZM9 5q1.300 2 0 4M11 3q2.700 4 0 8M13.200 1.300q4 5.700 0 11.400" /></svg>
      <svg viewBox="0 0 17 13" className="ml-[8px] mt-[16px] h-[13px] w-[17px]" fill="none" stroke="#222" strokeWidth="1.200"><path d="M6.500 3h6.500q1.500 0 1.500 1.500v5q0 1.500-1.500 1.500H4Q2.500 11 2.500 9.500V8M16 5.500v3" /><path d="M7 5h3.500l-1.500 4.500H4.500V8.500L7 6ZM3.500 0L1 4h3L2.500 7 6 3H4L5 0Z" fill="#222" stroke="#222" strokeWidth=".6" /></svg>
      <div className="ml-[9px] mt-[7px] w-[69px] whitespace-nowrap text-right text-[12px] leading-4 tracking-[-0.15px]"><div className="text-[11.500px]">11:30</div><div>03-04-2023</div></div>
      <div className="ml-[7px] mt-[15px] flex h-4 w-4 items-center justify-center rounded-full bg-[#0d57a4] text-[9px] font-bold text-white">4</div>
    </footer>
  );
}

export default function App() {
  return (
    <div className="flex h-[768px] w-[1366px] flex-col overflow-hidden bg-[#f7f7f7] font-['Open_Sans','Noto_Sans',sans-serif]">
      <TabStrip />
      <Toolbar />
      <div className="flex h-[650px] shrink-0">
        <div className="flex w-[1309px] shrink-0 border-t border-[#b5b5b5]">
          <SitePage />
          <Scrollbar />
        </div>
        <SideRail />
      </div>
      <Taskbar />
    </div>
  );
}
